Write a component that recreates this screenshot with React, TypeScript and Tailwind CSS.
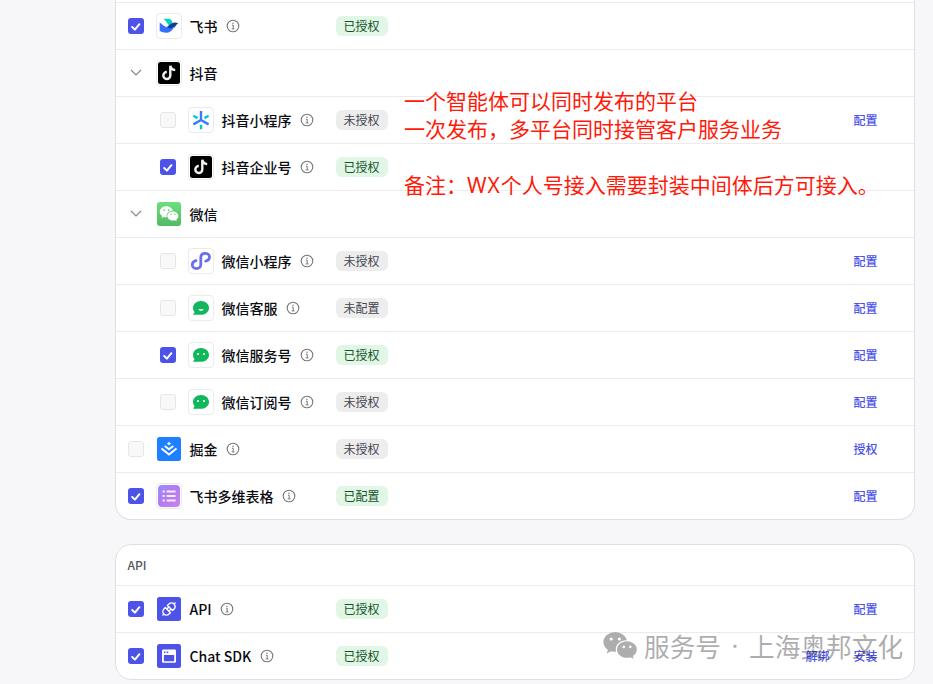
import clsx from 'clsx';
import type { ReactNode } from 'react';

type Action = '配置' | '授权' | '解绑' | '安装';

interface Channel {
    name: string;
    icon: ReactNode;
    plain?: boolean;
    group?: boolean;
    child?: boolean;
    checked?: boolean;
    status?: '已授权' | '未授权' | '已配置' | '未配置';
    actions?: Action[];
}

function FeishuIcon() {
    return (
        <svg width="24" height="24" viewBox="0 0 24 24">
            <path d="M6.4 4.8H13c1.2 1.1 2.1 2.5 2.5 4.1-1.3.6-2.3 1.5-3.6 2.7C10.3 9 8.6 6.8 6.4 4.800Z" fill="#00d6b9" />
            <path d="M2.7 8.5c3.3 3.1 6.6 4.9 10 5.500 1.700.3 3.100-.2 4.300-1.300-1.600 4-4.300 6.100-8 6.100-2.400 0-4.300-.7-6-1.700-.2-.2-.3-.4-.3-.7Z" fill="#3370ff" />
            <path d="M21.2 9.3c-2.800-1.300-5.700-.9-8.300 1.300-1.200 1-2.100 2-3.300 2.600 3.200 1.400 5.800 1.400 7.700-.4l-.9 1.700c1.800-1 2.300-3.800 4.800-5.200Z" fill="#133c9a" />
        </svg>
    );
}

function DouyinIcon() {
    return (
        <svg width="24" height="24" viewBox="0 0 24 24">
            <rect x="1" y="1" width="22" height="22" rx="2.5" fill="#000" />
            <path
                d="M13.300 4.700v9.900a3.500 3.500 0 1 1-3.500-3.600M13.400 4.700c.2 2.700 1.900 4.200 4.800 4.400"
                fill="none"
                stroke="#f1f1f1"
                strokeWidth="2.400"
            />
        </svg>
    );
}

function DouyinMiniIcon() {
    return (
        <svg width="24" height="24" viewBox="0 0 24 24" fill="none" strokeWidth="2.400">
            <path d="M12 3v9M12 12l-7.600 4.400M12 12l7.600 4.400" stroke="#3a7bfd" />
            <path d="M12 16.800v4.400M8.600 10.100 4.400 7.700M15.400 10.100l4.200-2.400" stroke="#00c8d2" />
        </svg>
    );
}

function WechatBubbles({ color, eye, size }: { color: string; eye: string; size: number }) {
    return (
        <svg width={size} height={size} viewBox="0 0 36 36">
            <path
                d="M13.200 4.200C6.600 4.200 1.400 8.500 1.400 14c0 3.100 1.700 5.900 4.500 7.700l-1.200 3.700 4.300-2.200c1.400.4 2.700.6 4.200.6h1c-.3-.9-.4-1.700-.4-2.500 0-5 4.700-9 10.500-9h.6c-1.100-4.700-6-8.100-11.700-8.100Z"
                fill={color}
            />
            <path
                d="M34.800 21.500c0-4.600-4.500-8.200-9.800-8.200-5.600 0-10 3.700-10 8.200 0 4.600 4.400 8.300 10 8.300 1.200 0 2.400-.2 3.500-.6l3.300 1.800-.9-3c2.400-1.600 3.900-3.900 3.900-6.500Z"
                fill={color}
            />
            <g fill={eye}>
                <circle cx="9.200" cy="11" r="1.600" />
                <circle cx="17.300" cy="11" r="1.600" />
                <circle cx="21.700" cy="18.900" r="1.300" />
                <circle cx="28.300" cy="18.900" r="1.300" />
            </g>
        </svg>
    );
}

function WechatIcon() {
    return (
        <span className="flex size-6 items-center justify-center rounded-[3px] bg-linear-to-b from-[#6be07d] to-[#55b964]">
            <WechatBubbles color="#fff" eye="#60cb70" size={20} />
        </span>
    );
}

function WechatMiniIcon() {
    return (
        <svg width="24" height="24" viewBox="0 0 24 24" fill="none" stroke="#6a6ff0" strokeWidth="2.800" strokeLinecap="round">
            <path d="M7 11.700c-2.200.5-3.700 2-3.700 4 0 2.300 1.800 3.900 4.200 3.900s4.300-1.600 4.300-4V8.300c0-2.400 1.900-4 4.300-4s4.400 1.600 4.400 3.800c0 2-1.500 3.600-3.800 4.100" />
        </svg>
    );
}

function BubbleIcon({ smile }: { smile?: boolean }) {
    return (
        <svg width="24" height="24" viewBox="0 0 24 24">
            <path
                d="M12 5c-4.500 0-8 3-8 6.900 0 1.600.6 3 1.600 4.200L4 18.700h8c4.500 0 8-3 8-6.800S16.500 5 12 5Z"
                fill="#12b65c"
            />
            {smile ? (
                <path d="M9.300 13h5.400c-.5 1.300-1.500 2-2.700 2s-2.200-.7-2.700-2Z" fill="#d8fbe7" />
            ) : (
                <g fill="#fff">
                    <circle cx="9" cy="11" r="1" />
                    <circle cx="15" cy="11" r="1" />
                </g>
            )}
        </svg>
    );
}

function JuejinIcon() {
    return (
        <svg width="24" height="24" viewBox="0 0 24 24">
            <rect width="24" height="24" rx="2.5" fill="#1e80ff" />
            <path d="m12 5 2.100 1.600L12 8.300 9.900 6.600Z" fill="#fff" />
            <path d="m7.700 9 4.300 3.300L16.300 9M4.500 11.600l7.500 5.900 7.500-5.900" fill="none" stroke="#fff" strokeWidth="1.900" />
        </svg>
    );
}

function BitableIcon() {
    return (
        <svg width="24" height="24" viewBox="0 0 24 24">
            <defs>
                <linearGradient id="bitable" x1="0" y1="0" x2="1" y2="1">
                    <stop offset="0" stopColor="#9a8bfa" />
                    <stop offset=".5" stopColor="#b47bee" />
                    <stop offset="1" stopColor="#cb84ec" />
                </linearGradient>
            </defs>
            <rect x="1" y="1" width="22" height="22" rx="4" fill="url(#bitable)" />
            <path d="M5.600 7.500h2.200M5.600 12h2.200M5.600 16.500h2.200M9.600 7.500h9M9.600 12h9M9.600 16.500h9" stroke="#f6eaff" strokeWidth="2" />
        </svg>
    );
}

function ApiIcon() {
    return (
        <svg width="24" height="24" viewBox="0 0 24 24">
            <rect width="24" height="24" rx="2.5" fill="#4d53e8" />
            <g transform="rotate(45 12 12)" fill="none" stroke="#fff" strokeWidth="1.400" strokeLinecap="round" strokeLinejoin="round">
                <path d="M8.400 10.600V8.400a3.600 3.600 0 0 1 7.200 0v2.200ZM12 4.700V3.400" />
                <path d="M8.400 13.600v2a3.600 3.600 0 0 0 7.200 0v-2ZM12 19.300v1.300M10.500 10.800v2.600M13.500 10.800v2.600" />
            </g>
        </svg>
    );
}

function SdkIcon() {
    return (
        <svg width="24" height="24" viewBox="0 0 24 24">
            <rect width="24" height="24" rx="2.5" fill="#4d53e8" />
            <rect x="5" y="5.600" width="14" height="13.200" rx="1.200" fill="#fff" />
            <path d="M6.900 11h10.300v6.200H6.900ZM6.900 7.400h1.500v1.500H6.900ZM9.700 7.400h1.500v1.500H9.700Z" fill="#4d53e8" />
        </svg>
    );
}

function InfoIcon() {
    return (
        <svg width="14" height="14" viewBox="0 0 14 14" fill="none" stroke="#76777b" className="ml-2 shrink-0">
            <circle cx="7" cy="7" r="5.800" strokeWidth="1.100" />
            <path d="M5.900 6.200h1.300v3.600M5.700 9.900h2.800" strokeWidth="1" />
            <circle cx="7" cy="4.200" r=".75" fill="#76777b" stroke="none" />
        </svg>
    );
}

function Checkbox({ checked }: { checked?: boolean }) {
    if (!checked) return <span className="size-4 rounded-[3px] border border-[#e6e6e8] bg-[#f8f8f8]" />;

    return (
        <span className="size-4 rounded-[3px] bg-[#4d53e8]">
            <svg width="16" height="16" viewBox="0 0 16 16" fill="none" stroke="#fff" strokeWidth="2">
                <path d="m4.200 9 2.700 2.600 4.500-5.400" strokeLinecap="round" strokeLinejoin="round" />
            </svg>
        </span>
    );
}

function ChannelRow({ channel }: { channel: Channel }) {
    const { name, icon, plain, group, child, checked, status, actions } = channel;

    return (
        <div className="flex h-[47px] items-center border-t border-[#ebebed] pr-[36.5px] pl-3">
            <div className={clsx('flex w-[208px] shrink-0 items-center', child && 'pl-8')}>
                {group ? (
                    <svg width="16" height="16" viewBox="0 0 16 16" fill="none" stroke="#85868a" strokeWidth="1.200">
                        <path d="m3 5 5 4.900L13 5" />
                    </svg>
                ) : (
                    <Checkbox checked={checked} />
                )}
                <span className={clsx('ml-3 shrink-0 rounded-[4px] border', plain ? 'border-transparent' : 'border-[#ebebed]')}>{icon}</span>
                <span className="mr-[0.5px] ml-[7.5px] text-sm font-medium whitespace-nowrap text-[#0b0c12]">{name}</span>
                {!group && <InfoIcon />}
            </div>
            {status && (
                <span
                    className={clsx(
                        'h-5 rounded-[6px] pr-[8.5px] pl-[7.5px] text-xs leading-5',
                        status.startsWith('已') ? 'bg-[#e1f6e5] text-[#14532a]' : 'bg-[#ededee] text-[#43454f]',
                    )}
                >
                    {status}
                </span>
            )}
            <div className="ml-auto flex gap-6 text-xs font-medium text-[#4d53e8]">
                {actions?.map((action) => (
                    <button key={action}>{action}</button>
                ))}
            </div>
        </div>
    );
}

const platforms: Channel[] = [
    { name: '飞书', icon: <FeishuIcon />, checked: true, status: '已授权' },
    { name: '抖音', icon: <DouyinIcon />, group: true },
    { name: '抖音小程序', icon: <DouyinMiniIcon />, child: true, status: '未授权', actions: ['配置'] },
    { name: '抖音企业号', icon: <DouyinIcon />, child: true, checked: true, status: '已授权' },
    { name: '微信', icon: <WechatIcon />, plain: true, group: true },
    { name: '微信小程序', icon: <WechatMiniIcon />, child: true, status: '未授权', actions: ['配置'] },
    { name: '微信客服', icon: <BubbleIcon smile />, child: true, status: '未配置', actions: ['配置'] },
    { name: '微信服务号', icon: <BubbleIcon />, child: true, checked: true, status: '已授权', actions: ['配置'] },
    { name: '微信订阅号', icon: <BubbleIcon />, child: true, status: '未授权', actions: ['配置'] },
    { name: '掘金', icon: <JuejinIcon />, plain: true, status: '未授权', actions: ['授权'] },
    { name: '飞书多维表格', icon: <BitableIcon />, checked: true, status: '已配置', actions: ['配置'] },
];

const apis: Channel[] = [
    { name: 'API', icon: <ApiIcon />, plain: true, checked: true, status: '已授权', actions: ['配置'] },
    { name: 'Chat SDK', icon: <SdkIcon />, plain: true, checked: true, status: '已授权', actions: ['解绑', '安装'] },
];

export default function App() {
    return (
        <div className="relative h-[684px] w-[933px] overflow-hidden bg-[#f7f7fa] pl-[115px] font-['Noto_Sans_CJK_SC',sans-serif]">
            <section className="w-[800px] rounded-b-2xl border-x border-b border-[#e0e0e3] bg-white pt-0.5">
                {platforms.map((channel) => (
                    <ChannelRow key={channel.name} channel={channel} />
                ))}
            </section>

            <section className="mt-6 w-[800px] rounded-2xl border border-[#e0e0e3] bg-white">
                <h2 className="flex h-10 items-center px-[11.5px] text-xs font-medium text-[#54555c]">API</h2>
                {apis.map((channel) => (
                    <ChannelRow key={channel.name} channel={channel} />
                ))}
            </section>

            {/* Annotation laid over the table */}
            <div className="absolute top-[86px] left-[404px] text-[21px] leading-7 whitespace-nowrap text-[#ff1a0a]">
                <p>一个智能体可以同时发布的平台</p>
                <p>一次发布，多平台同时接管客户服务业务</p>
                <p className="mt-7">
                    备注：<span className="font-['Noto_Sans'] tracking-[1px]">WX</span>个人号接入需要封装中间体后方可接入。
                </p>
            </div>

            {/* Watermark */}
            <div className="pointer-events-none absolute top-[628px] left-[602px] flex items-center text-[#161616] opacity-35">
                <WechatBubbles color="#161616" eye="#fff" size={36} />
                <span className="ml-1.5 flex text-[25.7px] leading-9 whitespace-nowrap">
                    服务号<span className="w-7 text-center font-['Noto_Sans']">·</span>上海奥邦文化
                </span>
            </div>
        </div>
    );
}
